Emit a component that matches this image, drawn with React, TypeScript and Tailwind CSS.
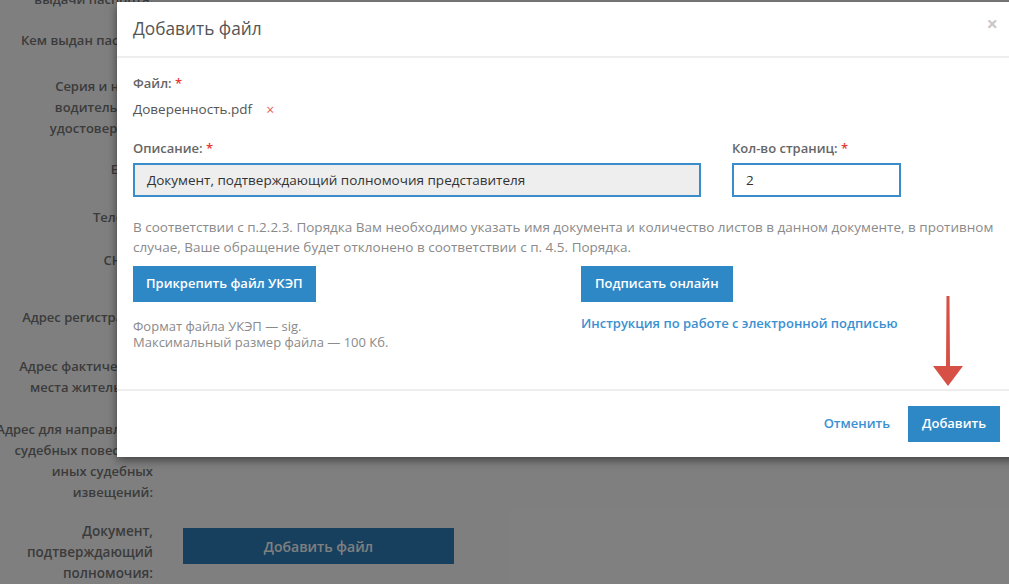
import type { FC } from "react";

const rows: { label: string[]; top: string }[] = [
  { label: ["выдачи паспорта:"], top: "-mt-[11px]" },
  { label: ["Кем выдан паспорт:"], top: "mt-[20px]" },
  { label: ["Серия и номер", "водительского", "удостоверения:"], top: "mt-[25px]" },
  { label: ["E-mail:"], top: "mt-[20px]" },
  { label: ["Телефон:"], top: "mt-[27px]" },
  { label: ["СНИЛС:"], top: "mt-[22px]" },
  { label: ["Адрес регистрации:"], top: "mt-[36px]" },
  { label: ["Адрес фактического", "места жительства:"], top: "mt-[28px]" },
  { label: ["Адрес для направления", "судебных повесток и", "иных судебных", "извещений:"], top: "mt-[21px]" },
];

const App: FC = function () {
  return (
    <div
      className="relative w-[1009px] h-[584px] overflow-hidden bg-white"
      style={{ fontFamily: '"Open Sans", "Noto Sans", sans-serif' }}
    >
      {/* Page behind the dialog */}
      <div className="flex flex-col">
        {rows.map((r, i) => (
          <div key={i} className={`${r.top} w-[153px] text-right text-[13px] leading-[21px] font-semibold text-[#777] whitespace-nowrap flex flex-col items-end`}>
            {r.label.map((l) => (
              <div key={l}>{l}</div>
            ))}
          </div>
        ))}
        <div className="mt-[18px] flex items-start">
          <div className="w-[153px] text-right text-[13.5px] leading-[21px] font-semibold text-[#777]">
            <div>Документ,</div>
            <div>подтверждающий</div>
            <div>полномочия:</div>
          </div>
          <button className="ml-[30px] mt-[7px] w-[271px] h-[36px] bg-[#2c80bc] text-white text-[14px] font-semibold">
            Добавить файл
          </button>
        </div>
      </div>

      {/* Backdrop */}
      <div className="absolute inset-0 bg-black/50" />

      {/* Modal */}
      <div className="absolute left-[117px] top-[2px] w-[900px] bg-white shadow-[0_3px_9px_rgba(0,0,0,0.5)]">
        <div className="h-[56px] border-b-2 border-[#eee] flex items-center justify-between pl-4 pr-[19px]">
          <h4 className="text-[17.3px] text-[#555]">Добавить файл</h4>
          <span className="text-[#c8c8c8] text-[20px] font-bold leading-none -mt-[10px]">×</span>
        </div>

        <div className="px-4 pt-[16px] pb-[39px] text-[13.5px] text-[#555]">
          <div className="text-[13px] font-semibold text-[#666] leading-[19px]">
            Файл: <span className="text-[#e53935]">*</span>
          </div>
          <div className="mt-[7px] flex items-center leading-[19px]">
            <span>Доверенность.pdf</span>
            <span className="ml-[14px] text-[#e8625a] text-[14px]">×</span>
          </div>

          <div className="mt-[20px] flex gap-[31px]">
            <div className="w-[568px]">
              <div className="text-[13px] font-semibold text-[#666] leading-[19px]">
                Описание: <span className="text-[#e53935]">*</span>
              </div>
              <div className="mt-[5px] h-[34px] border-2 border-[#3a8ccb] bg-[#eeeeee] flex items-center px-[12px] text-[#333]">
                Документ, подтверждающий полномочия представителя
              </div>
            </div>
            <div className="w-[169px]">
              <div className="text-[13px] font-semibold text-[#666] leading-[19px] whitespace-nowrap">
                Кол-во страниц: <span className="text-[#e53935]">*</span>
              </div>
              <div className="mt-[5px] h-[34px] border-2 border-[#3a8ccb] bg-white flex items-center px-[12px] text-[#333]">
                2
              </div>
            </div>
          </div>

          <p className="mt-[20px] text-[13.5px] leading-[20px] text-[#8a8a8a]">
            В соответствии с п.2.2.3. Порядка Вам необходимо указать имя документа и количество листов в данном документе, в противном случае, Ваше обращение будет отклонено в соответствии с п. 4.5. Порядка.
          </p>

          <div className="mt-[9px] flex">
            <div className="w-[448px]">
              <button className="h-[36px] px-[13px] bg-[#2e88c6] text-white text-[13px] font-semibold">
                Прикрепить файл УКЭП
              </button>
              <div className="mt-[16px] text-[13px] leading-[16px] text-[#8a8a8a]">
                <div>Формат файла УКЭП — sig.</div>
                <div>Максимальный размер файла — 100 Кб.</div>
              </div>
            </div>
            <div>
              <button className="h-[36px] px-[14px] bg-[#2e88c6] text-white text-[13px] font-semibold">
                Подписать онлайн
              </button>
              <div className="mt-[12px] text-[13px] font-semibold text-[#3a90d0]">
                Инструкция по работе с электронной подписью
              </div>
            </div>
          </div>
        </div>

        <div className="border-t-2 border-[#eee] h-[68px] flex items-center justify-end gap-[18px] pr-[17px]">
          <span className="text-[13px] font-semibold text-[#3a90d0]">Отменить</span>
          <button className="h-[36px] w-[92px] bg-[#2e88c6] text-white text-[13px] font-semibold">
            Добавить
          </button>
        </div>
      </div>

      {/* Red arrow annotation */}
      <svg className="absolute left-[930px] top-[294px]" width="36" height="94" viewBox="0 0 36 94">
        <path d="M16.5 2 L19.5 2 L20 72 L33 72 L18 92 L3 72 L16 72 Z" fill="#d65045" />
      </svg>
    </div>
  );
};

export default App;
